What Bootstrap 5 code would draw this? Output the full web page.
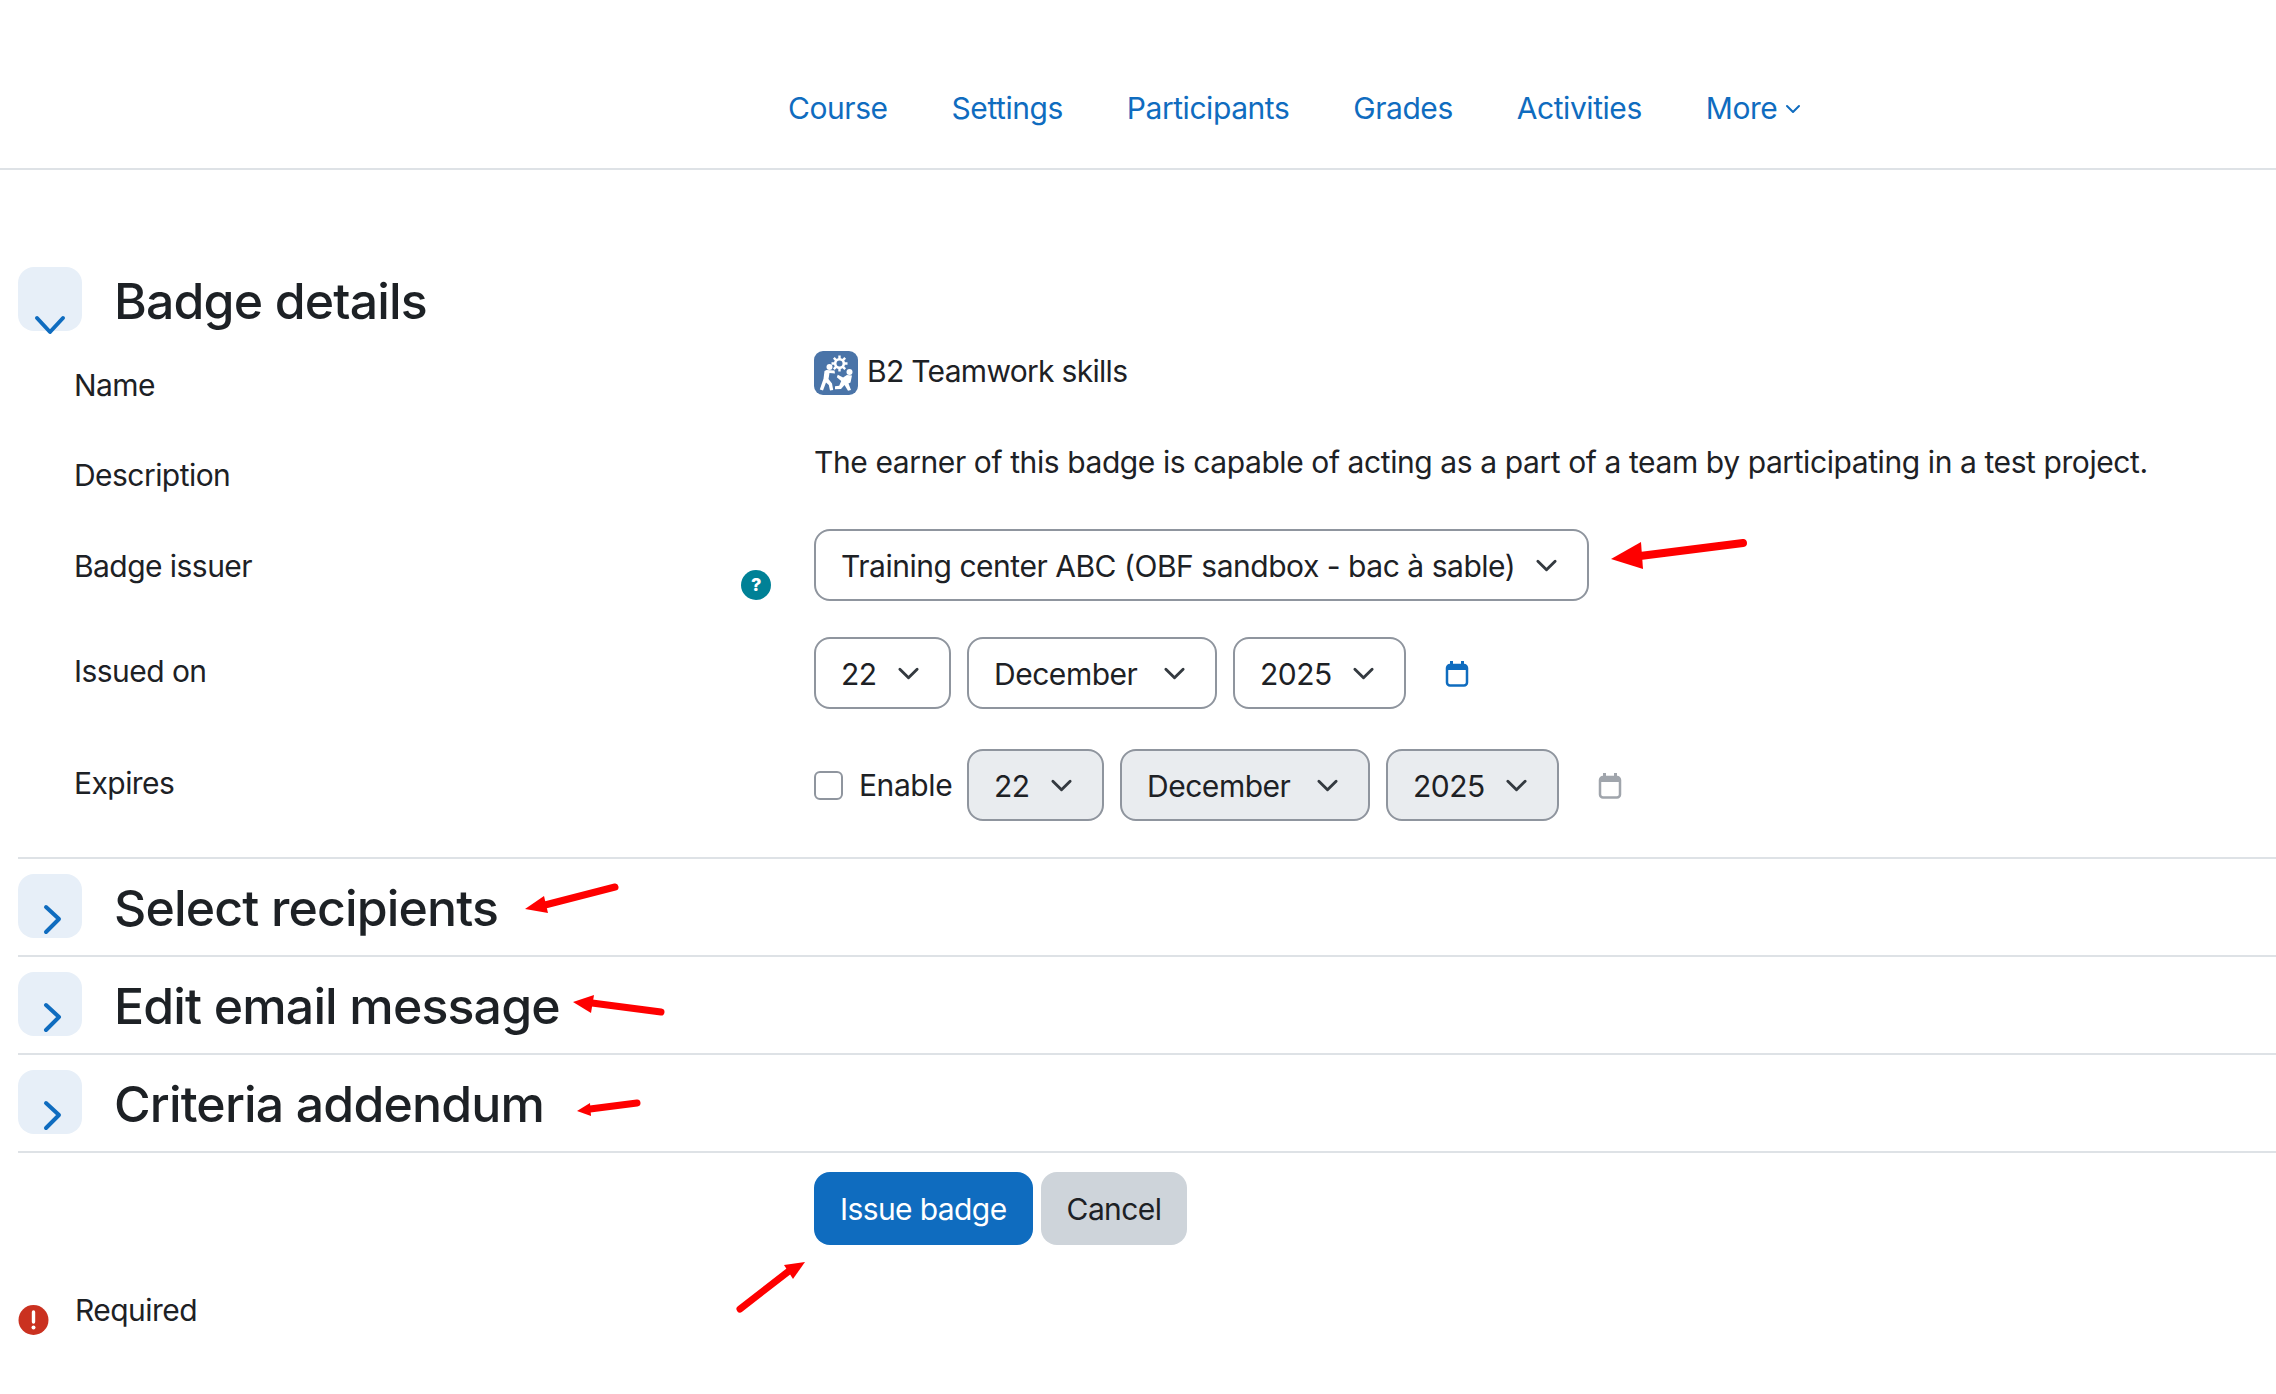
<!DOCTYPE html>
<html lang="en">
<head>
  <meta charset="UTF-8">
  <meta name="viewport" content="width=device-width, initial-scale=1.0">
  <title>Issue badge</title>
  <link href="https://cdn.jsdelivr.net/npm/bootstrap@5.3.2/dist/css/bootstrap.min.css" rel="stylesheet">
  <style>
    body { font-family: Inter, "Liberation Sans", sans-serif; font-size: 30px; line-height: 45px; letter-spacing: -0.41px; color: #1d2125; background: #fff; min-height: 1394px; overflow: hidden; }
    .top-nav { height: 170px; padding: 86px 0 0 788px; gap: 64px; border-bottom: 2px solid #dee2e6; }
    .top-nav .nav-link { padding: 0; color: #0f6cbf; font-size: 30px; letter-spacing: -0.45px; }
    .form-wrap { padding: 97px 0 0 18px; }
    .sect-head { height: 64px; gap: 32px; }
    .sect-toggle { width: 64px; height: 64px; padding: 0; border: 0; border-radius: 16px; background: #e7eff8; flex-shrink: 0; }
    .sect-toggle svg { display: block; overflow: visible; }
    .sect-title { font-size: 50px; line-height: 68px; font-weight: 500; letter-spacing: -0.85px; margin: 0; }
    .sect-line { border-top: 2px solid #dee2e6; height: 98px; padding-top: 15px; }
    .sect-end { border-top: 2px solid #dee2e6; }
    .field-row { display: flex; }
    .field-name { width: 796px; flex-shrink: 0; padding: 12px 0 0 56px; position: relative; letter-spacing: -0.55px; }
    .row-name { margin-top: 20px; margin-bottom: 32px; }
    .row-desc { margin-bottom: 31px; }
    .row-issuer { margin-bottom: 36px; }
    .row-issued { margin-bottom: 40px; }
    .row-expires { margin-bottom: 36px; }
    .label-low { padding-top: 13px; }
    .label-issuer { padding-top: 15px; }
    .help-dot { position: absolute; left: 723px; top: 41px; }
    .badge-pic { width: 44px; height: 44px; margin-right: 9px; }
    .name-text { position: relative; top: -2px; letter-spacing: -0.7px; }
    .moodle-select { height: 72px; padding: 3px 24px 0 25px; border: 2px solid #8f959e; border-radius: 16px; font-size: 30px; line-height: 45px; letter-spacing: -0.47px; color: #1d2125; background-size: 31px 23px; background-position: right 25px center; }
    .moodle-select:disabled { background-color: #e9ecef; color: #1d2125; }
    .w-issuer { width: 775px; }
    .w-day { width: 137px; }
    .w-month { width: 250px; }
    .w-year { width: 173px; }
    .date-gap { gap: 16px; }
    .cal-icon { margin: 2px 0 0 23px; }
    .enable-wrap { width: 137px; }
    .enable-box { margin-right: 16px; }
    .enable-box .form-check-input { width: 29px; height: 29px; margin: 0; border: 2px solid #8f959e; border-radius: 6px; }
    .btn-row { padding: 19px 0 0 796px; gap: 8px; }
    .act-btn { height: 73px; padding: 2px 26px 0; font-size: 30px; line-height: 45px; letter-spacing: -0.6px; border: 0; border-radius: 16px; }
    .act-primary { background: #0f6cbf; color: #fff; }
    .act-cancel { background: #ced4da; color: #1d2125; }
    .required-line { gap: 26px; }
    .required-line svg { margin-top: 60px; }
    .required-line span { margin-top: 43px; letter-spacing: -0.55px; }
    .arrows { position: absolute; top: 0; left: 0; pointer-events: none; }
  </style>
</head>
<body>
  <ul class="nav top-nav">
    <li class="nav-item"><a class="nav-link" href="#">Course</a></li>
    <li class="nav-item"><a class="nav-link" href="#">Settings</a></li>
    <li class="nav-item"><a class="nav-link" href="#">Participants</a></li>
    <li class="nav-item"><a class="nav-link" href="#">Grades</a></li>
    <li class="nav-item"><a class="nav-link" href="#">Activities</a></li>
    <li class="nav-item"><a class="nav-link d-flex align-items-center gap-2" href="#">More
      <svg width="16" height="10" viewBox="0 0 16 10" fill="none" stroke="#0f6cbf" stroke-width="2" stroke-linecap="round" stroke-linejoin="round"><path d="M2 2l6 6 6-6"/></svg></a></li>
  </ul>

  <form class="form-wrap">
    <div class="d-flex align-items-start sect-head">
      <button type="button" class="sect-toggle"><svg width="64" height="64" viewBox="0 0 64 64" fill="none" stroke="#0f6cbf" stroke-width="4" stroke-linecap="round" stroke-linejoin="round"><path d="M19 51l13 14 13-14"/></svg></button>
      <h3 class="sect-title">Badge details</h3>
    </div>

    <div class="field-row row-name">
      <div class="field-name">Name</div>
      <div class="d-flex align-items-start">
        <svg class="badge-pic" viewBox="0 0 44 44">
          <rect width="44" height="44" rx="9" fill="#4a74a8"/>
          <g fill="#fff">
            <g stroke="#fff" stroke-width="2.400"><path d="M25.500 4.500v16M17.500 12.500h16M19.800 6.800l11.400 11.400M31.200 6.800L19.800 18.200"/></g>
            <circle cx="25.500" cy="12.500" r="5.600"/>
            <circle cx="25.500" cy="12.500" r="3" fill="#4a74a8"/>
            <circle cx="15.500" cy="16" r="3"/>
            <circle cx="35.500" cy="21" r="3"/>
            <path d="M12.500 19l8 .5.500 3-5.500-.4-1 6 3.500 4.400 1.200 6.500-3.200.5-1.200-5.500-2.800-2.500-3 7.900-3.200-.9 3.700-10.800 1-7.700z"/>
            <path d="M38 24.500l-1.500 7-2 1 2.500 6.500-3 .8-3.500-5.800-3.500 4-6 .2v-3l4.200-.4 2-4.800-4.400-3.700 1-2.500 5.300 2.800 3.800-2.600z"/>
          </g>
        </svg>
        <span class="name-text">B2 Teamwork skills</span>
      </div>
    </div>

    <div class="field-row row-desc">
      <div class="field-name label-low">Description</div>
      <div>The earner of this badge is capable of acting as a part of a team by participating in a test project.</div>
    </div>

    <div class="field-row row-issuer">
      <div class="field-name label-issuer">Badge issuer
        <svg class="help-dot" width="30" height="30" viewBox="0 0 30 30"><circle cx="15" cy="15" r="15" fill="#008196"/><text x="15" y="21" text-anchor="middle" font-family="Inter, sans-serif" font-size="18" font-weight="800" fill="#fff">?</text></svg>
      </div>
      <div><select class="form-select moodle-select w-issuer"><option>Training center ABC (OBF sandbox - bac à sable)</option></select></div>
    </div>

    <div class="field-row row-issued">
      <div class="field-name">Issued on</div>
      <div class="d-flex align-items-center date-gap">
        <select class="form-select moodle-select w-day"><option>22</option></select>
        <select class="form-select moodle-select w-month"><option>December</option></select>
        <select class="form-select moodle-select w-year"><option>2025</option></select>
        <svg class="cal-icon" width="24" height="26" viewBox="0 0 24 26"><path d="M6.500 0v6M17.500 0v6" stroke="#0f6cbf" stroke-width="3"/><rect x="2" y="4" width="20" height="20.500" rx="3" fill="#fff" stroke="#0f6cbf" stroke-width="2.500"/><path d="M2 4h20v5H2z" fill="#0f6cbf"/></svg>
      </div>
    </div>

    <div class="field-row row-expires">
      <div class="field-name">Expires</div>
      <div class="d-flex align-items-center date-gap">
        <div class="d-flex align-items-center enable-wrap">
          <div class="enable-box"><input class="form-check-input d-block" type="checkbox" id="enableExpires"></div>
          <label for="enableExpires">Enable</label>
        </div>
        <select class="form-select moodle-select w-day" disabled><option>22</option></select>
        <select class="form-select moodle-select w-month" disabled><option>December</option></select>
        <select class="form-select moodle-select w-year" disabled><option>2025</option></select>
        <svg class="cal-icon" width="24" height="26" viewBox="0 0 24 26"><path d="M6.500 0v6M17.500 0v6" stroke="#a0a5ac" stroke-width="3"/><rect x="2" y="4" width="20" height="20.500" rx="3" fill="#fff" stroke="#a0a5ac" stroke-width="2.500"/><path d="M2 4h20v5H2z" fill="#a0a5ac"/></svg>
      </div>
    </div>

    <div class="sect-line">
      <div class="d-flex align-items-start sect-head">
        <button type="button" class="sect-toggle"><svg width="64" height="64" viewBox="0 0 64 64" fill="none" stroke="#0f6cbf" stroke-width="4" stroke-linecap="round" stroke-linejoin="round"><path d="M28 33l13 12-13 13"/></svg></button>
        <h3 class="sect-title">Select recipients</h3>
      </div>
    </div>
    <div class="sect-line">
      <div class="d-flex align-items-start sect-head">
        <button type="button" class="sect-toggle"><svg width="64" height="64" viewBox="0 0 64 64" fill="none" stroke="#0f6cbf" stroke-width="4" stroke-linecap="round" stroke-linejoin="round"><path d="M28 33l13 12-13 13"/></svg></button>
        <h3 class="sect-title">Edit email message</h3>
      </div>
    </div>
    <div class="sect-line">
      <div class="d-flex align-items-start sect-head">
        <button type="button" class="sect-toggle"><svg width="64" height="64" viewBox="0 0 64 64" fill="none" stroke="#0f6cbf" stroke-width="4" stroke-linecap="round" stroke-linejoin="round"><path d="M28 33l13 12-13 13"/></svg></button>
        <h3 class="sect-title">Criteria addendum</h3>
      </div>
    </div>
    <div class="sect-end"></div>

    <div class="d-flex btn-row">
      <button type="button" class="act-btn act-primary">Issue badge</button>
      <button type="button" class="act-btn act-cancel">Cancel</button>
    </div>

    <div class="d-flex align-items-start required-line">
      <svg width="31" height="30" viewBox="0 0 31 30"><circle cx="15.500" cy="15" r="15" fill="#ca3120"/><path d="M15.500 7v10" stroke="#fff" stroke-width="3.400" stroke-linecap="round"/><circle cx="15.500" cy="22.500" r="2" fill="#fff"/></svg>
      <span>Required</span>
    </div>
  </form>

  <svg class="arrows" width="2276" height="1394" viewBox="0 0 2276 1394" fill="#fe0000" stroke="#fe0000" stroke-linecap="round">
    <path d="M1743 543L1640 556" stroke-width="8"/><path d="M1611 559l30-17 2 27z" stroke="none"/>
    <path d="M615 887L545 905" stroke-width="7"/><path d="M525 909l19-13 4 17z" stroke="none"/>
    <path d="M661 1012L592 1003" stroke-width="7"/><path d="M573 1002l21-7-3 18z" stroke="none"/>
    <path d="M637 1103L590 1109" stroke-width="7"/><path d="M577 1111l13-8 1 13z" stroke="none"/>
    <path d="M740 1309L789 1271" stroke-width="7"/><path d="M805 1262l-21 3 9 14z" stroke="none"/>
  </svg>
  <script src="https://cdn.jsdelivr.net/npm/bootstrap@5.3.2/dist/js/bootstrap.bundle.min.js"></script>
</body>
</html>
